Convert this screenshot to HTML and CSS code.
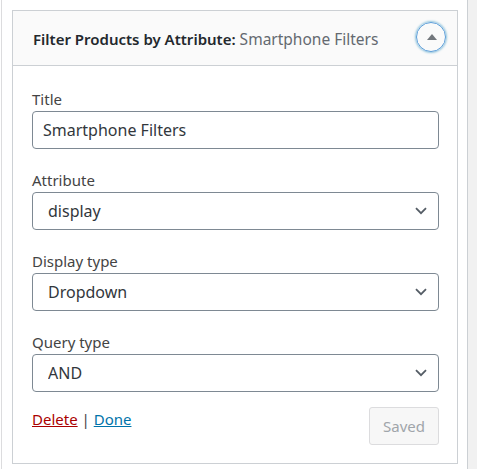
FILE: index.html
```html
<!DOCTYPE html>
<html lang="en">
<head>
<meta charset="utf-8">
<title>Widget</title>
<link rel="stylesheet" href="styles.css">
</head>
<body>
<div class="page">
  <div class="edge"></div>
  <div class="sidebar">
    <div class="widget">
      <div class="widget-top">
        <h3 class="widget-title">Filter Products by Attribute:<span class="in-title"> Smartphone Filters</span></h3>
        <button class="toggle" type="button" aria-label="Toggle widget">
          <svg width="10" height="6" viewBox="0 0 10 6"><path d="M0 6 L5 0 L10 6 Z" fill="#72777c"/></svg>
        </button>
      </div>
      <div class="widget-inside">
        <div class="field">
          <label class="label" for="t">Title</label>
          <input class="control text" id="t" type="text" value="Smartphone Filters">
        </div>
        <div class="field">
          <label class="label">Attribute</label>
          <div class="select-wrap">
            <select class="control select"><option>display</option></select>
            <svg class="chev" width="12" height="8" viewBox="0 0 12 8"><path d="M1 1.2 L6 6.2 L11 1.2" fill="none" stroke="#555d66" stroke-width="1.8"/></svg>
          </div>
        </div>
        <div class="field">
          <label class="label">Display type</label>
          <div class="select-wrap">
            <select class="control select"><option>Dropdown</option></select>
            <svg class="chev" width="12" height="8" viewBox="0 0 12 8"><path d="M1 1.2 L6 6.2 L11 1.2" fill="none" stroke="#555d66" stroke-width="1.8"/></svg>
          </div>
        </div>
        <div class="field">
          <label class="label">Query type</label>
          <div class="select-wrap">
            <select class="control select"><option>AND</option></select>
            <svg class="chev" width="12" height="8" viewBox="0 0 12 8"><path d="M1 1.2 L6 6.2 L11 1.2" fill="none" stroke="#555d66" stroke-width="1.8"/></svg>
          </div>
        </div>
        <div class="actions">
          <div class="links"><a class="delete" href="#">Delete</a> | <a class="done" href="#">Done</a></div>
          <button class="saved" type="button" disabled>Saved</button>
        </div>
      </div>
    </div>
  </div>
  <div class="rest"></div>
</div>
</body>
</html>
```
FILE: styles.css
```css
html, body {
  margin: 0;
  padding: 0;
  background: #fff;
}
body {
  font-family: "Noto Sans", "Open Sans", sans-serif;
  color: #444;
}
.page {
  display: flex;
  height: 469px;
}
.edge {
  width: 1px;
  background: #fff;
}
.sidebar {
  width: 446px;
  border-left: 1px solid #dcdcde;
  border-right: 1px solid #ccd0d4;
  padding: 10px 9px 0 10px;
  background: #fff;
}
.rest {
  flex: 1;
  background: #f1f1f1;
}
.widget {
  border: 1px solid #ccd0d4;
  background: #fff;
}
.widget-top {
  display: flex;
  align-items: center;
  justify-content: space-between;
  height: 54px;
  background: #fafafa;
  border-bottom: 1px solid #ccd0d4;
  padding: 0 11px 0 20px;
}
.widget-title {
  margin: 0;
  font-size: 15px;
  line-height: 20px;
  font-weight: 600;
  color: #23282d;
  padding-top: 1px;
  white-space: nowrap;
}
.in-title {
  font-weight: 400;
  font-size: 15.5px;
  color: #646970;
}
.toggle {
  width: 30px;
  height: 30px;
  margin-top: -2px;
  border-radius: 50%;
  border: 1px solid #5b9dd9;
  box-shadow: 0 0 2px 1px rgba(30, 140, 190, 0.45);
  background: transparent;
  display: flex;
  align-items: center;
  justify-content: center;
  padding: 0 0 1px 1px;
}
.widget-inside {
  padding: 23px 18px 18px 19px;
}
.field {
  margin-bottom: 21px;
}
.label {
  display: block;
  font-size: 15px;
  line-height: 20px;
  margin-bottom: 2px;
  color: #444;
}
.control {
  display: block;
  box-sizing: border-box;
  width: 100%;
  height: 38px;
  margin: 0;
  border: 1px solid #7e8993;
  border-radius: 4px;
  background: #fff;
  font-family: "Noto Sans", "Open Sans", sans-serif;
  font-size: 16px;
  color: #32373c;
}
.text {
  padding: 0 10px;
}
.select-wrap {
  position: relative;
}
.select {
  -webkit-appearance: none;
  appearance: none;
  padding: 0 30px 0 15px;
}
.chev {
  position: absolute;
  right: 12px;
  top: 15px;
  pointer-events: none;
}
.actions {
  display: flex;
  justify-content: space-between;
  align-items: flex-start;
  margin-top: -6px;
}
.links {
  font-size: 15px;
  line-height: 20px;
  padding-top: 2px;
  color: #444;
}
.delete {
  color: #a00;
}
.done {
  color: #0073aa;
}
.saved {
  height: 38px;
  padding: 0 13px;
  border: 1px solid #dcdcde;
  border-radius: 3px;
  background: #f7f7f7;
  color: #a0a5aa;
  font-family: "Noto Sans", "Open Sans", sans-serif;
  font-size: 15px;
}
```
